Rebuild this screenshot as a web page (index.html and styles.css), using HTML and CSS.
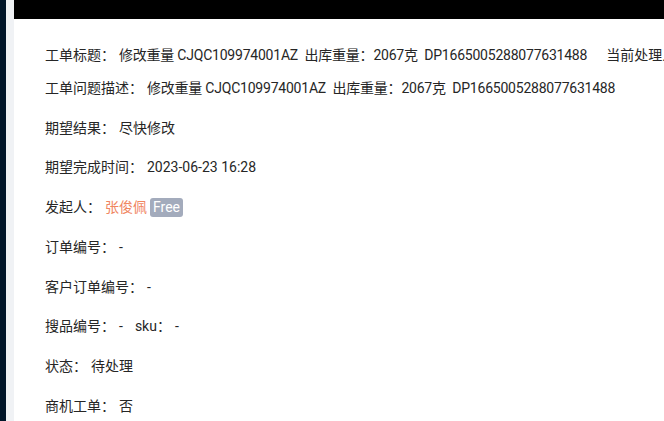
FILE: index.html
```html
<!DOCTYPE html>
<html lang="zh-CN">
<head>
    <meta charset="UTF-8">
    <meta name="viewport" content="width=device-width, initial-scale=1.0">
    <title>工单详情</title>
    <link rel="stylesheet" href="styles.css">
</head>
<body>
    <div class="layout">
        <aside class="sider"></aside>
        <div class="gutter"></div>
        <main class="main">
            <div class="topbar"></div>
            <div class="content">
                <div class="summary">
                    <div class="row row-title">
                        <span class="label">工单标题：</span>
                        <span class="value value-long">修改重量 CJQC109974001AZ&nbsp; 出库重量：2067克&nbsp; DP1665005288077631488</span>
                        <span class="handler">当前处理人：-</span>
                    </div>
                    <div class="row">
                        <span class="label">工单问题描述：</span>
                        <span class="value value-long">修改重量 CJQC109974001AZ&nbsp; 出库重量：2067克&nbsp; DP1665005288077631488</span>
                    </div>
                </div>

                <div class="row">
                    <span class="label">期望结果：</span>
                    <span class="value">尽快修改</span>
                </div>
                <div class="row">
                    <span class="label">期望完成时间：</span>
                    <span class="value">2023-06-23 16:28</span>
                </div>
                <div class="row">
                    <span class="label">发起人：</span>
                    <span class="value"><span class="user">张俊佩</span><span class="tag">Free</span></span>
                </div>
                <div class="row">
                    <span class="label">订单编号：</span>
                    <span class="value">-</span>
                </div>
                <div class="row">
                    <span class="label">客户订单编号：</span>
                    <span class="value">-</span>
                </div>
                <div class="row">
                    <span class="label">搜品编号：</span>
                    <span class="value">-</span>
                    <span class="label sku">sku：</span>
                    <span class="value">-</span>
                </div>
                <div class="row">
                    <span class="label">状态：</span>
                    <span class="value">待处理</span>
                </div>
                <div class="row">
                    <span class="label">商机工单：</span>
                    <span class="value">否</span>
                </div>
            </div>
        </main>
    </div>
</body>
</html>
```

FILE: styles.css
```css
/* Basic Reset */
* {
    margin: 0;
    padding: 0;
    box-sizing: border-box;
}

body {
    font-family: Roboto, 'Noto Sans CJK SC', sans-serif;
    font-size: 14px;
    color: #262626;
    background-color: #fff;
    overflow: hidden;
}

.layout {
    display: flex;
    min-height: 100vh;
}

.sider {
    width: 6px;
    flex-shrink: 0;
    background-color: #001529;
}

.gutter {
    width: 8px;
    flex-shrink: 0;
    background-color: #f0f2f5;
}

.main {
    flex: 1;
    min-width: 0;
    overflow: hidden;
    background-color: #fff;
}

.topbar {
    height: 19px;
    background-color: #000;
}

.content {
    padding: 26px 0 0 31px;
}

.summary {
    margin-bottom: 20px;
}

.summary .row {
    margin-bottom: 12.5px;
}

.summary .row:last-child {
    margin-bottom: 0;
}

.row {
    display: flex;
    align-items: center;
    height: 20px;
    line-height: 20px;
    margin-bottom: 19.8px;
    white-space: nowrap;
}

.label {
    margin-right: 4px;
}

.label.sku {
    margin-left: 12px;
}

.value-long {
    letter-spacing: -0.22px;
}

.handler {
    margin-left: 19px;
}

.user {
    color: #f0855f;
}

.tag {
    display: inline-block;
    margin-left: 3px;
    padding: 0 3px;
    height: 19px;
    line-height: 19px;
    border-radius: 3px;
    background-color: #a3abbc;
    color: #fff;
}
```
